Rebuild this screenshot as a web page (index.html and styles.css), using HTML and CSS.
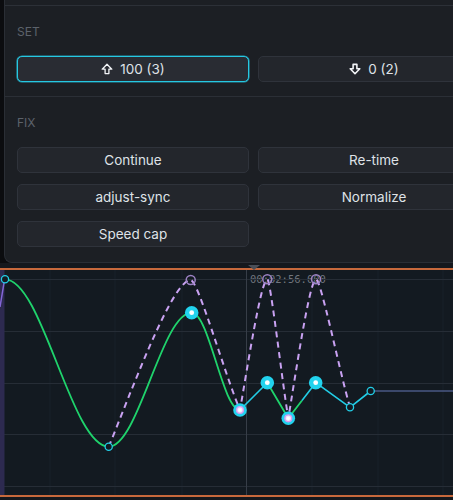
FILE: index.html
```html
<!DOCTYPE html>
<html>
<head>
<meta charset="utf-8">
<link rel="stylesheet" href="styles.css">
</head>
<body>
<div class="app">
  <div class="popover">
    <div class="pop-top"></div>
    <section class="section section-set">
      <div class="label">SET</div>
      <div class="grid">
        <button class="btn active"><svg class="ico" viewBox="0 0 12 12"><path d="M6 1.3 L10.8 6.2 H7.9 V10.6 H4.1 V6.2 H1.2 Z"/></svg><span>100 (3)</span></button>
        <button class="btn"><svg class="ico ico-down" viewBox="0 0 12 12"><path d="M6 10.7 L10.8 5.8 H7.9 V1.4 H4.1 V5.8 H1.2 Z"/></svg><span>0 (2)</span></button>
      </div>
    </section>
    <section class="section section-fix">
      <div class="label">FIX</div>
      <div class="grid">
        <button class="btn">Continue</button>
        <button class="btn">Re-time</button>
        <button class="btn">adjust-sync</button>
        <button class="btn">Normalize</button>
        <button class="btn">Speed cap</button>
      </div>
    </section>
  </div>
  <div class="timeline">
    <div class="playhead-marker"></div>
    <div class="track">
      <span class="timestamp">00:02:56.000</span>
      <svg class="chart" viewBox="0 0 453 225" width="453" height="225">
        <g class="vgrid">
          <line x1="50" y1="0" x2="50" y2="225"/>
          <line x1="115" y1="0" x2="115" y2="225"/>
          <line x1="182" y1="0" x2="182" y2="225"/>
          <line x1="312" y1="0" x2="312" y2="225"/>
          <line x1="378" y1="0" x2="378" y2="225"/>
          <line x1="443" y1="0" x2="443" y2="225"/>
        </g>
        <g class="hgrid">
          <line x1="0" y1="9.5" x2="453" y2="9.5"/>
          <line x1="0" y1="61.5" x2="453" y2="61.5"/>
          <line x1="0" y1="113.5" x2="453" y2="113.5"/>
          <line x1="0" y1="164.5" x2="453" y2="164.5"/>
          <line x1="0" y1="216.5" x2="453" y2="216.5"/>
        </g>
        <line class="playhead" x1="246.5" y1="0" x2="246.5" y2="225"/>
        <rect class="band" x="0" y="0" width="4.5" height="225"/>
        <path class="band-line" d="M0,37 L4.5,10"/>
        <path class="green" d="M5,9.3 C42.3,9.3 71.4,176.7 108.7,176.7 C138.6,176.7 161.8,42.7 191.7,42.7 C209.1,42.7 222.6,140 240,140"/>
        <path class="green" d="M267.3,112.7 L288.3,148.3 L302,130.5"/>
        <path class="cyan" d="M240,140 L267.3,112.7 M302,130.5 L315.7,112.7 L350,137.3 L370.7,121"/>
        <path class="slate" d="M370.7,121 H453"/>
        <path class="dashed" d="M108.7,176.7 C130,125 172,10 190.7,10 C198,10 225,105 240,140 C247.1,99.5 261,9.3 267.3,9.3 C270.5,9.3 282,110.8 288.3,148.3 C295.5,105.2 309.6,9.3 316,9.3 C321,9.3 339.8,102.7 350,137.3"/>
        <g class="peak">
          <circle cx="190.7" cy="10" r="4.5"/>
          <circle cx="267.3" cy="9.3" r="4.5"/>
          <circle cx="316" cy="9.3" r="4.5"/>
        </g>
        <g class="hollow">
          <circle cx="5" cy="9.3" r="3.6"/>
          <circle cx="108.7" cy="176.7" r="3.6"/>
          <circle cx="350" cy="137.3" r="3.6"/>
          <circle cx="370.7" cy="121" r="3.6"/>
        </g>
        <g class="dot">
          <circle cx="191.7" cy="42.7" r="6.8"/>
          <circle cx="267.3" cy="112.7" r="6.8"/>
          <circle cx="315.7" cy="112.7" r="6.8"/>
          <circle cx="240" cy="140" r="6.8"/>
          <circle cx="288.3" cy="148.3" r="6.8"/>
        </g>
        <g class="dot-center">
          <circle cx="191.7" cy="42.7" r="2.4"/>
          <circle cx="267.3" cy="112.7" r="2.4"/>
          <circle cx="315.7" cy="112.7" r="2.4"/>
        </g>
        <g class="ring">
          <circle cx="240" cy="140" r="3.4"/>
          <circle cx="288.3" cy="148.3" r="3.4"/>
        </g>
        <g class="ring-center">
          <circle cx="240" cy="140" r="1.6"/>
          <circle cx="288.3" cy="148.3" r="1.6"/>
        </g>
      </svg>
    </div>
  </div>
</div>
</body>
</html>
```
FILE: styles.css
```css
html, body {
  margin: 0;
  padding: 0;
}
body {
  width: 453px;
  height: 500px;
  overflow: hidden;
  background: #0b0c0f;
  font-family: "Inter", "Noto Sans", "DejaVu Sans", sans-serif;
}
.app {
  display: flex;
  flex-direction: column;
  width: 453px;
  height: 500px;
  overflow: hidden;
}
.popover {
  margin-left: 4px;
  width: 449px;
  height: 263px;
  flex: none;
  box-sizing: border-box;
  overflow: hidden;
  background: #1c1f24;
  border-left: 1px solid #2a2e35;
  border-bottom: 1px solid #2a2e35;
  border-radius: 0 0 0 8px;
}
.pop-top {
  height: 5px;
  border-bottom: 1px solid #2c3037;
}
.section {
  padding: 19px 0 14px 12px;
}
.section-set {
  border-bottom: 1px solid #2b2f36;
}
.label {
  font-size: 12px;
  line-height: 14px;
  color: #5c626b;
  margin-bottom: 17px;
}
.grid {
  display: grid;
  grid-template-columns: 232px 232px;
  column-gap: 9px;
  row-gap: 11px;
}
.btn {
  height: 26px;
  box-sizing: border-box;
  margin: 0;
  padding: 0;
  border: 1px solid #2f333b;
  border-radius: 5px;
  background: #23262c;
  color: #dfe2e7;
  font-family: inherit;
  font-size: 13.5px;
  display: flex;
  align-items: center;
  justify-content: center;
  gap: 7px;
}
.btn.active {
  background: #292c33;
  border-color: #26c8e2;
  box-shadow: 0 0 0 0.6px rgba(38, 200, 226, 0.7);
}
.ico {
  width: 12px;
  height: 12px;
  fill: none;
  stroke: #f2f4f7;
  stroke-width: 1.3;
  stroke-linejoin: round;
}
.ico-down {
  stroke-width: 1.6;
}
.timeline {
  position: relative;
  flex: 1;
  background: #15181d;
  padding-top: 5px;
}
.playhead-marker {
  position: absolute;
  left: 248px;
  top: 2px;
  width: 0;
  height: 0;
  border-left: 6px solid transparent;
  border-right: 6px solid transparent;
  border-top: 5px solid #4a4f58;
  z-index: 2;
}
.track {
  position: relative;
  height: 225px;
  background: #131a21;
  border-top: 2px solid #c8693c;
  border-bottom: 2px solid #c8693c;
}
.chart {
  display: block;
  position: relative;
}
.timestamp {
  position: absolute;
  left: 250px;
  top: 3px;
  font-family: "DejaVu Sans Mono", "Liberation Mono", monospace;
  font-size: 10.5px;
  line-height: 12px;
  color: #71767e;
}
.vgrid line {
  stroke: #19212a;
  stroke-width: 1;
}
.hgrid line {
  stroke: #262d36;
  stroke-width: 1;
}
.playhead {
  stroke: #373e48;
  stroke-width: 1;
}
.band {
  fill: #2d2a50;
}
.band-line {
  stroke: #8467d8;
  stroke-width: 1.5;
  fill: none;
}
.green {
  fill: none;
  stroke: #1fd36c;
  stroke-width: 1.8;
  stroke-linejoin: round;
}
.cyan {
  fill: none;
  stroke: #22cde6;
  stroke-width: 1.6;
  stroke-linejoin: round;
}
.slate {
  fill: none;
  stroke: #4a5884;
  stroke-width: 1.6;
}
.dashed {
  fill: none;
  stroke: #c9a2f2;
  stroke-width: 2;
  stroke-dasharray: 6 4.5;
}
.peak circle {
  fill: none;
  stroke: #9c82c4;
  stroke-width: 1.5;
}
.hollow circle {
  fill: #131a21;
  stroke: #22cde6;
  stroke-width: 1.3;
}
.dot circle {
  fill: #22d3ee;
}
.dot-center circle {
  fill: #ffffff;
}
.ring circle {
  fill: #f2e6fb;
  stroke: #d49cf0;
  stroke-width: 1.4;
}
.ring-center circle {
  fill: #ffffff;
}
```
